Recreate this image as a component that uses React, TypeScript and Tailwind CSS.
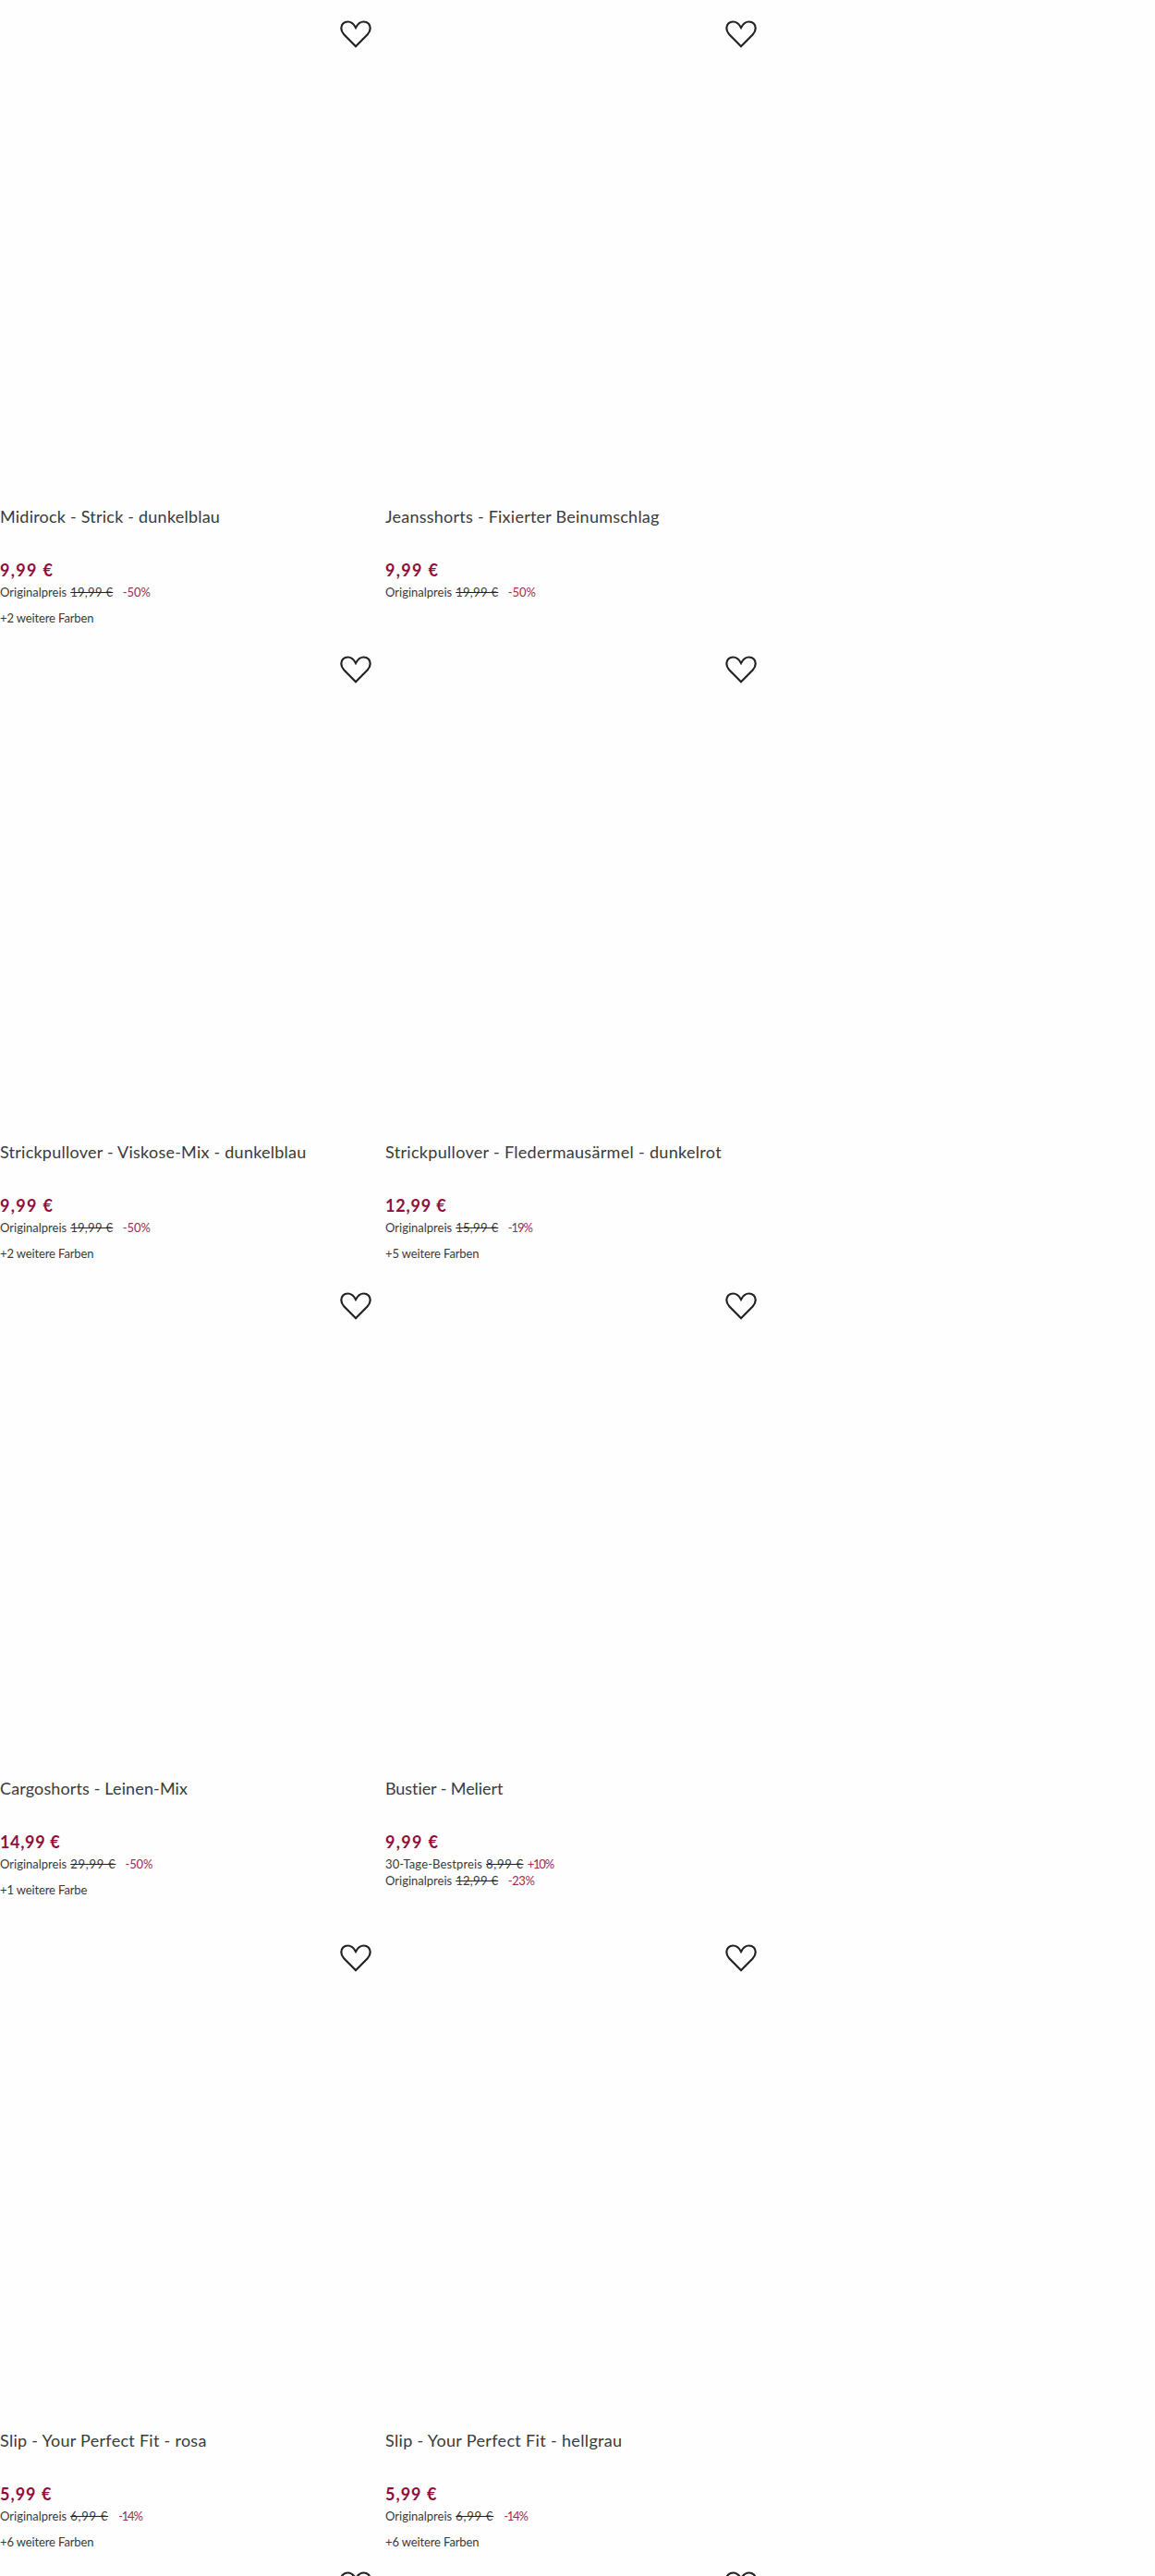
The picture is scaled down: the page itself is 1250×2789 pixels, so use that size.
type OldPrice = {
  label: string;
  labelClass?: string;
  value: string;
  valueClass: string;
  percent: string;
  percentClass: string;
};

type Product = {
  title: string;
  titleClass: string;
  price: string;
  priceClass: string;
  oldPrices: OldPrice[];
  colors?: string;
};

type Row = { height: string; products: Product[] };

const rows: Row[] = [
  {
    height: 'h-[688px]',
    products: [
      {
        title: 'Midirock - Strick - dunkelblau',
        titleClass: 'tracking-[0.22px]',
        price: '9,99 €',
        priceClass: 'tracking-[1.3px]',
        oldPrices: [
          { label: 'Originalpreis', value: '19,99 €', valueClass: 'tracking-[0.3px]', percent: '-50%', percentClass: 'ml-[10.5px] tracking-[-0.1px]' },
        ],
        colors: '+2 weitere Farben',
      },
      {
        title: 'Jeansshorts - Fixierter Beinumschlag',
        titleClass: 'tracking-[0.24px]',
        price: '9,99 €',
        priceClass: 'tracking-[1.3px]',
        oldPrices: [
          { label: 'Originalpreis', value: '19,99 €', valueClass: 'tracking-[0.3px]', percent: '-50%', percentClass: 'ml-[10.5px] tracking-[-0.1px]' },
        ],
      },
    ],
  },
  {
    height: 'h-[689px]',
    products: [
      {
        title: 'Strickpullover - Viskose-Mix - dunkelblau',
        titleClass: 'tracking-[0.24px]',
        price: '9,99 €',
        priceClass: 'tracking-[1.3px]',
        oldPrices: [
          { label: 'Originalpreis', value: '19,99 €', valueClass: 'tracking-[0.3px]', percent: '-50%', percentClass: 'ml-[10.5px] tracking-[-0.1px]' },
        ],
        colors: '+2 weitere Farben',
      },
      {
        title: 'Strickpullover - Fledermausärmel - dunkelrot',
        titleClass: 'tracking-[0.31px]',
        price: '12,99 €',
        priceClass: 'tracking-[0.8px]',
        oldPrices: [
          { label: 'Originalpreis', value: '15,99 €', valueClass: 'tracking-[0.3px]', percent: '-19%', percentClass: 'ml-[10.5px] tracking-[-1.1px]' },
        ],
        colors: '+5 weitere Farben',
      },
    ],
  },
  {
    height: 'h-[706px]',
    products: [
      {
        title: 'Cargoshorts - Leinen-Mix',
        titleClass: 'tracking-[0.13px]',
        price: '14,99 €',
        priceClass: 'tracking-[0.65px]',
        oldPrices: [
          { label: 'Originalpreis', value: '29,99 €', valueClass: 'tracking-[0.75px]', percent: '-50%', percentClass: 'ml-[10px] tracking-[-0.1px]' },
        ],
        colors: '+1 weitere Farbe',
      },
      {
        title: 'Bustier - Meliert',
        titleClass: 'tracking-[-0.08px]',
        price: '9,99 €',
        priceClass: 'tracking-[1.3px]',
        oldPrices: [
          { label: '30-Tage-Bestpreis', labelClass: 'tracking-[0.12px]', value: '8,99 €', valueClass: 'tracking-[0.7px]', percent: '+10%', percentClass: 'ml-[4px] tracking-[-1.2px]' },
          { label: 'Originalpreis', value: '12,99 €', valueClass: 'tracking-[0.3px]', percent: '-23%', percentClass: 'ml-[10.5px] tracking-[-0.4px]' },
        ],
      },
    ],
  },
  {
    height: 'h-[679px]',
    products: [
      {
        title: 'Slip - Your Perfect Fit - rosa',
        titleClass: 'tracking-[0.28px]',
        price: '5,99 €',
        priceClass: 'tracking-[1px]',
        oldPrices: [
          { label: 'Originalpreis', value: '6,99 €', valueClass: 'tracking-[0.75px]', percent: '-14%', percentClass: 'ml-[11px] tracking-[-1.2px]' },
        ],
        colors: '+6 weitere Farben',
      },
      {
        title: 'Slip - Your Perfect Fit - hellgrau',
        titleClass: 'tracking-[0.34px]',
        price: '5,99 €',
        priceClass: 'tracking-[1px]',
        oldPrices: [
          { label: 'Originalpreis', value: '6,99 €', valueClass: 'tracking-[0.75px]', percent: '-14%', percentClass: 'ml-[11px] tracking-[-1.2px]' },
        ],
        colors: '+6 weitere Farben',
      },
    ],
  },
];

function WishlistButton() {
  return (
    <button type="button" aria-label="Auf die Wunschliste" className="mt-[21px] mr-[14px] block self-end">
      <svg width="36" height="32" viewBox="0 0 36 32" fill="none" stroke="#222" strokeWidth="2.2">
        <path d="M18 8.9C15.8 4.7 12.6 2.5 9.4 2.5C5.1 2.5 2.3 5.6 2.3 9.5C2.3 12.2 3.4 14.3 5.4 16.4L18 29.3L30.6 16.4C32.6 14.3 33.7 12.2 33.7 9.5C33.7 5.6 30.9 2.5 26.6 2.5C23.4 2.5 20.2 4.7 18 8.9Z" />
      </svg>
    </button>
  );
}

function ProductCard({ product }: { product: Product }) {
  return (
    <article className="flex flex-col">
      <WishlistButton />
      {/* Image slot */}
      <div className="h-[494px] shrink-0" />
      <h3 className={`h-[58px] text-[18px] leading-6 ${product.titleClass}`}>{product.title}</h3>
      <p className={`h-[27px] text-[18px] leading-6 font-bold text-[#900f3a] ${product.priceClass}`}>{product.price}</p>
      {product.oldPrices.map((old) => (
        <p key={old.label} className="flex text-[13px] leading-[18px]">
          <span className={old.labelClass}>{old.label}</span>
          <span className={`ml-[4px] line-through decoration-[#222] ${old.valueClass}`}>{old.value}</span>
          <span className={`text-[#a02a50] ${old.percentClass}`}>{old.percent}</span>
        </p>
      ))}
      {product.colors && (
        <p className="mt-[10px] text-[13px] leading-[18px] tracking-[-0.12px]">{product.colors}</p>
      )}
    </article>
  );
}

export default function App() {
  return (
    <main className="h-[2789px] w-full overflow-hidden bg-[#fefefe] font-['Lato',sans-serif] whitespace-nowrap text-[#3a3a3a]">
      {rows.map((row, i) => (
        <div key={i} className={`grid grid-cols-[417px_417px] ${row.height}`}>
          {row.products.map((product) => (
            <ProductCard key={product.title} product={product} />
          ))}
        </div>
      ))}
      {/* Next row, cut off by the viewport */}
      <div className="grid grid-cols-[417px_417px]">
        {[0, 1].map((n) => (
          <div key={n} className="flex flex-col">
            <WishlistButton />
          </div>
        ))}
      </div>
    </main>
  );
}
